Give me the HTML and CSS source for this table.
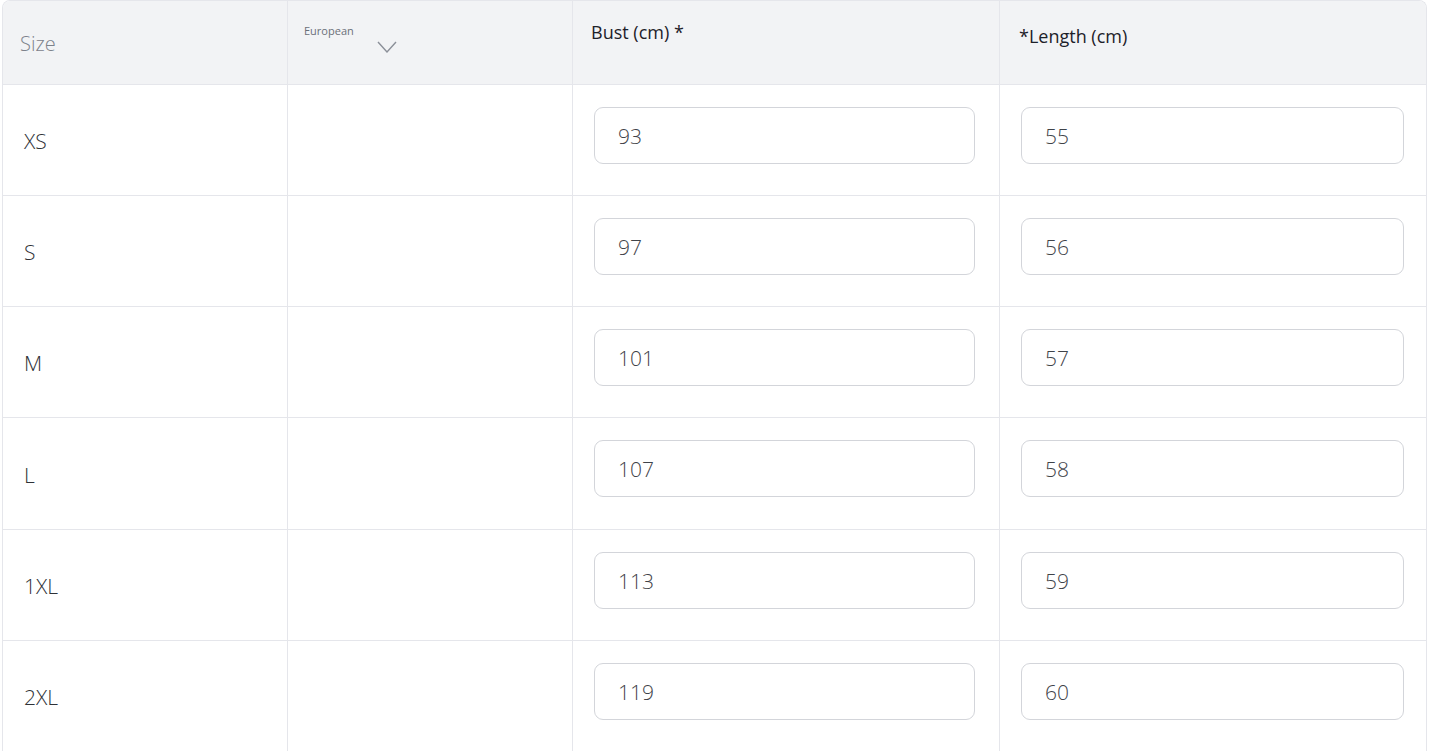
FILE: index.html
```html
<!DOCTYPE html>
<html lang="en">
<head>
  <meta charset="UTF-8" />
  <title>Size chart</title>
  <link rel="stylesheet" href="styles.css">
</head>
<body>
  <div class="size-table">
    <div class="head-cell head-size">Size</div>
    <div class="head-cell head-standard">
      <span class="standard-label">European</span>
      <svg class="chevron" width="20" height="12" viewBox="0 0 20 12">
        <path d="M1 1 L10 11 L19 1" fill="none" stroke="#8c9099" stroke-width="1.4"/>
      </svg>
    </div>
    <div class="head-cell head-bust">Bust (cm) *</div>
    <div class="head-cell head-length">*Length (cm)</div>

    <div class="cell size">XS</div>
    <div class="cell"></div>
    <div class="cell field"><input type="text" value="93"></div>
    <div class="cell field"><input type="text" value="55"></div>

    <div class="cell size">S</div>
    <div class="cell"></div>
    <div class="cell field"><input type="text" value="97"></div>
    <div class="cell field"><input type="text" value="56"></div>

    <div class="cell size">M</div>
    <div class="cell"></div>
    <div class="cell field"><input type="text" value="101"></div>
    <div class="cell field"><input type="text" value="57"></div>

    <div class="cell size">L</div>
    <div class="cell"></div>
    <div class="cell field"><input type="text" value="107"></div>
    <div class="cell field"><input type="text" value="58"></div>

    <div class="cell size">1XL</div>
    <div class="cell"></div>
    <div class="cell field"><input type="text" value="113"></div>
    <div class="cell field"><input type="text" value="59"></div>

    <div class="cell size">2XL</div>
    <div class="cell"></div>
    <div class="cell field"><input type="text" value="119"></div>
    <div class="cell field"><input type="text" value="60"></div>
  </div>
</body>
</html>
```

FILE: styles.css
```css
body, html {
  margin: 0;
  padding: 0;
  background: white;
  font-family: "Open Sans", "Noto Sans", sans-serif;
  overflow: hidden;
}

.size-table {
  margin: 0 2px;
  display: grid;
  grid-template-columns: 285px 285px 427px 428px;
  grid-template-rows: 84px 111px 111px 111px 112px 111px 111px;
  border: 1px solid #e5e6eb;
  border-bottom: none;
  border-radius: 8px 8px 0 0;
  overflow: hidden;
  box-sizing: border-box;
}

.head-cell {
  background: #f2f3f5;
  border-right: 1px solid #e5e6eb;
  border-bottom: 1px solid #e5e6eb;
  box-sizing: border-box;
  position: relative;
}

.head-length { border-right: none; }

.head-size {
  color: #7d828b;
  font-size: 20px;
  font-weight: 300;
  padding: 29px 0 0 17px;
}

.standard-label {
  position: absolute;
  left: 16px;
  top: 22px;
  font-size: 11px;
  color: #6b7079;
}

.chevron {
  position: absolute;
  left: 89px;
  top: 40px;
}

.head-bust {
  font-size: 18px;
  color: #1d2129;
  padding: 19px 0 0 18px;
}

.head-length {
  font-size: 18px;
  color: #1d2129;
  padding: 23px 0 0 19px;
}

.cell {
  border-right: 1px solid #e5e6eb;
  border-bottom: 1px solid #e5e6eb;
  box-sizing: border-box;
}

.cell:nth-child(4n) { border-right: none; }

.size {
  display: flex;
  align-items: center;
  padding: 2px 0 0 21px;
  font-size: 21px;
  font-weight: 300;
  color: #2f3237;
}

.field {
  padding: 22px 24px 0 21px;
}

.field input {
  width: 100%;
  height: 57px;
  box-sizing: border-box;
  border: 1.5px solid #d3d5da;
  border-radius: 9px;
  padding: 0 0 0 23px;
  font-family: "Open Sans", "Noto Sans", sans-serif;
  font-size: 21px;
  font-weight: 300;
  color: #3f4349;
  background: white;
  outline: none;
}
```
